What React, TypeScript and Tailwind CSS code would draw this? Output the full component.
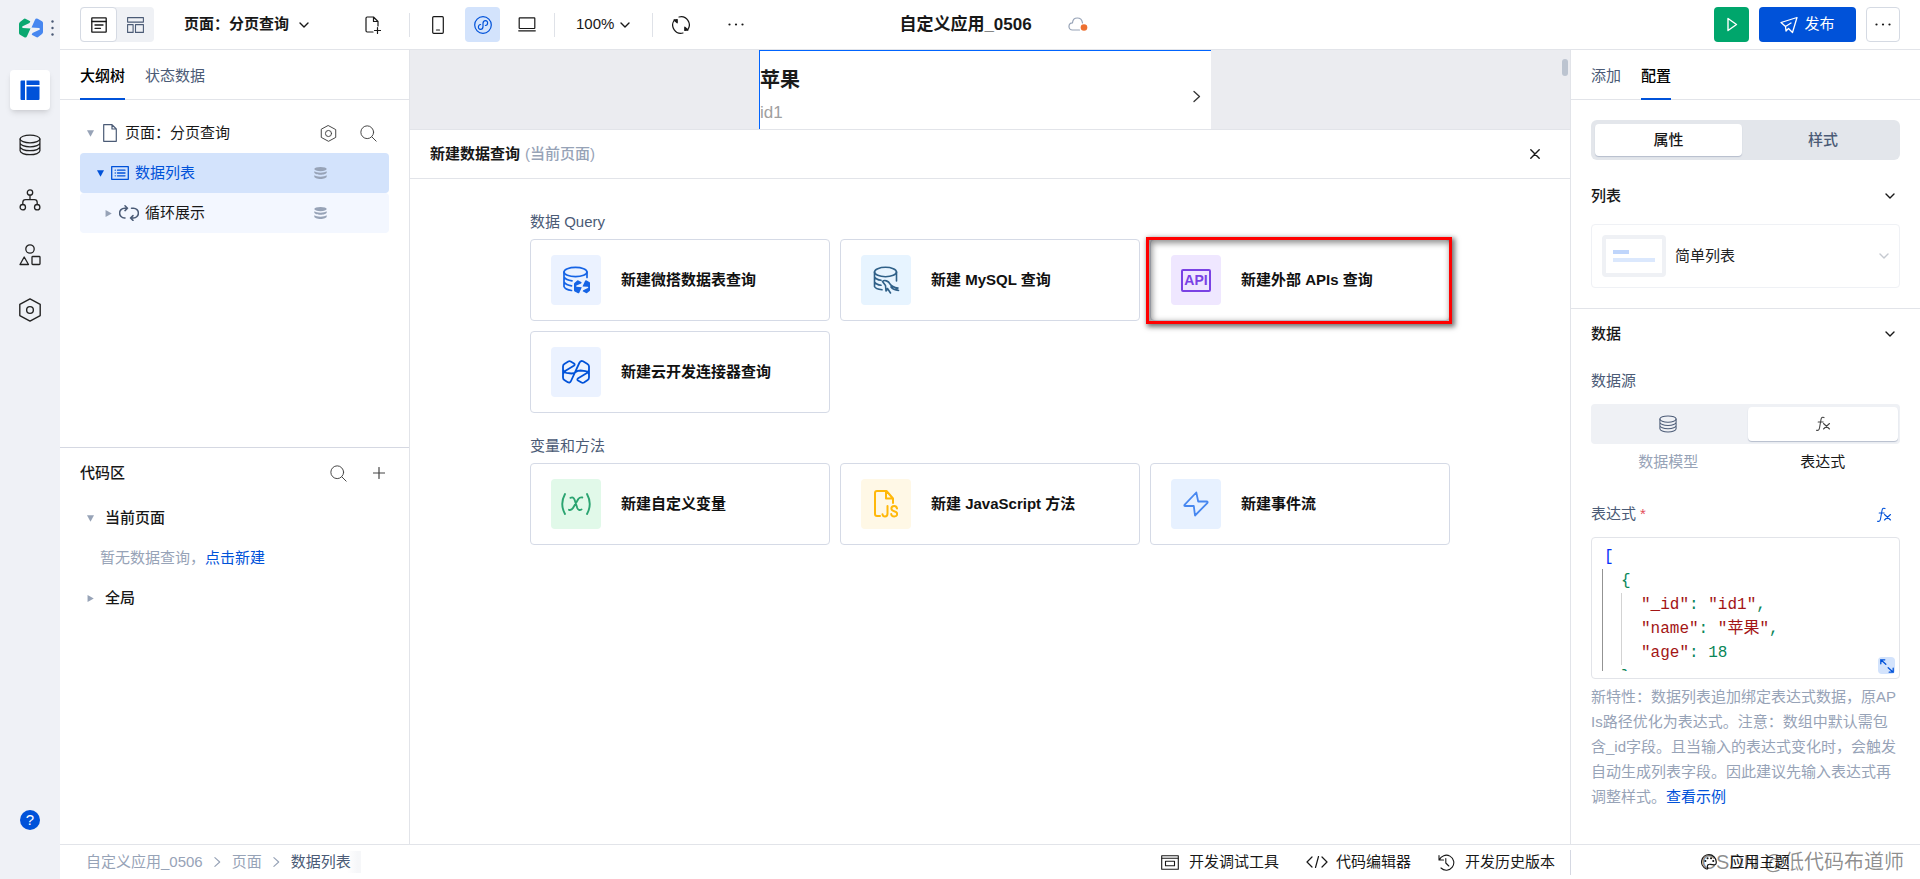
import { useState, type ReactNode } from 'react'

type IconProps = { className?: string }

type SvgProps = IconProps & { box?: string; width?: number; children: ReactNode }

function Svg({ className = 'size-5', box = '0 0 20 20', width = 1.15, children }: SvgProps) {
  return (
    <svg
      className={`shrink-0 ${className}`}
      viewBox={box}
      fill="none"
      stroke="currentColor"
      strokeWidth={width}
      strokeLinejoin="round"
      strokeLinecap="round"
      aria-hidden="true"
    >
      {children}
    </svg>
  )
}

const greenHalf =
  'M0 6Q0 4.800 1 4L4.800.9Q5.500.3 6.400.7L11.300 3.300 10.500 5 3.600 8.200Q2.400 9.200 3.900 9.900L11.500 10.600 8 18.200Q7.200 20.200 5.300 19.300L1 16.800Q0 16.200 0 15Z'
const blueHalf =
  'M24 14Q24 15.200 23 16L19.200 19.100Q18.500 19.700 17.600 19.300L12.700 16.700 13.500 15 20.400 11.800Q21.600 10.800 20.100 10.100L12.500 9.400 16 1.800Q16.800-.2 18.700.7L23 3.200Q24 3.800 24 5Z'

function Logo() {
  return (
    <svg className="h-5 w-6 shrink-0" viewBox="0 0 24 20" aria-hidden="true">
      <path fill="#0aa870" d={greenHalf} />
      <path fill="#4787f0" d={blueHalf} />
    </svg>
  )
}

const DatabaseIcon = ({ className = 'size-[22px]' }: IconProps) => (
  <Svg className={className}>
    <ellipse cx="10" cy="4.500" rx="9" ry="3.500" />
    <path d="M1 4.500v10.800c0 1.900 4 3.500 9 3.500s9-1.600 9-3.500V4.500M1 8.100c0 1.900 4 3.500 9 3.500s9-1.600 9-3.500M1 11.700c0 1.900 4 3.500 9 3.500s9-1.600 9-3.500" />
  </Svg>
)

const StackIcon = () => (
  <svg className="h-3 w-[13px] shrink-0 text-[#97a3b7]" viewBox="0 0 13 12" fill="currentColor" aria-hidden="true">
    <ellipse cx="6.500" cy="2.100" rx="6.200" ry="2.100" />
    <path d="M.3 4.300c1 .9 3.500 1.400 6.200 1.400s5.200-.5 6.200-1.400v1.200c0 1.200-2.800 2.300-6.200 2.300S.3 6.700.3 5.500ZM.3 8.300c1 .9 3.500 1.400 6.200 1.400s5.200-.5 6.200-1.400v1.200c0 1.200-2.800 2.500-6.200 2.500S.3 10.700.3 9.500Z" />
  </svg>
)

const HexIcon = ({ className = 'size-4', r = 3.6 }: IconProps & { r?: number }) => (
  <Svg className={className}>
    <path d="M10 .8 18.500 5.400v9.200L10 19.200 1.500 14.600V5.400Z" />
    <circle cx="10" cy="10" r={r} />
  </Svg>
)

const SearchIcon = () => (
  <Svg className="size-[17px]">
    <circle cx="8.500" cy="8.500" r="7.500" />
    <path d="m14 14 5 5" />
  </Svg>
)

const ChevronDown = ({ className = 'size-[10px]' }: IconProps) => (
  <Svg className={className} box="0 0 10 10" width={1.4}>
    <path d="m1 3 4 4 4-4" />
  </Svg>
)

const ChevronRight = ({ className = 'h-3 w-2' }: IconProps) => (
  <Svg className={className} box="0 0 8 12" width={1.3}>
    <path d="m1 1 5.500 5L1 11" />
  </Svg>
)

function Caret({ open, className = 'text-[#97a3b7]' }: IconProps & { open?: boolean }) {
  return (
    <svg className={`size-[7px] shrink-0 ${className}`} viewBox="0 0 6 6" fill="currentColor" aria-hidden="true">
      <path d={open ? 'M0 .3h6L3 5.800Z' : 'M.5 0v6L5.800 3Z'} />
    </svg>
  )
}

const Dots = () => (
  <svg className="h-[3px] w-4" viewBox="0 0 16 3" fill="currentColor" aria-hidden="true">
    <circle cx="1.500" cy="1.500" r="1.100" />
    <circle cx="8" cy="1.500" r="1.100" />
    <circle cx="14.500" cy="1.500" r="1.100" />
  </svg>
)

const FxIcon = () => (
  <Svg className="size-4" box="0 0 16 16" width={1.1}>
    <path d="M9 1.600C7.300.8 6.300 1.600 6 3.500L4.500 12c-.4 2-1.300 2.800-3 2.200M3.200 6h5M8.500 7.500l6 5.500M14.500 7.500l-6 5.500" />
  </Svg>
)

const Divider = () => <span className="h-6 w-px bg-[#dfe2e8]" />

const navItems = [
  {
    label: '设计',
    icon: (
      <svg className="size-5" viewBox="0 0 20 20" fill="#0052d9" aria-hidden="true">
        <path d="M1.500.5H5V20H1.500Q.5 20 .5 19V1.500Q.5.500 1.500.500ZM6.500.5H18.500Q19.500.500 19.500 1.500V5H6.500ZM6.500 6.500H19.500V19Q19.500 20 18.500 20H6.500Z" />
      </svg>
    ),
  },
  { label: '数据源', icon: <DatabaseIcon /> },
  {
    label: '流程',
    icon: (
      <Svg className="size-[22px]" box="0 0 22 22" width={1.3}>
        <circle cx="11" cy="3.500" r="2.700" />
        <circle cx="3.800" cy="18.200" r="2.700" />
        <circle cx="18.200" cy="18.200" r="2.700" />
        <path d="M11 6.200v4.500M3.800 15.500v-2q0-2.800 2.800-2.800h8.800q2.800 0 2.800 2.800v2" />
      </Svg>
    ),
  },
  {
    label: '素材',
    icon: (
      <Svg className="size-[22px]" box="0 0 22 22" width={1.3}>
        <circle cx="11" cy="5" r="4.200" />
        <path d="m5.200 13 4.300 7.500H1Z" />
        <rect x="13" y="12.500" width="8" height="8" rx=".8" />
      </Svg>
    ),
  },
  { label: '设置', icon: <HexIcon className="size-6" r={2.8} /> },
]

function Sidebar() {
  return (
    <nav className="flex w-[60px] shrink-0 flex-col items-center bg-[#eff1f6]" aria-label="主导航">
      <div className="flex h-[55px] w-full items-center gap-2 pl-[19px]">
        <Logo />
        <svg className="h-4 w-[3px]" viewBox="0 0 3 16" fill="#4b5b76" aria-hidden="true">
          <circle cx="1.500" cy="1.500" r="1.200" />
          <circle cx="1.500" cy="8" r="1.200" />
          <circle cx="1.500" cy="14.500" r="1.200" />
        </svg>
      </div>
      <div className="flex flex-col gap-[15px] pt-[15px]">
        {navItems.map((item, i) => (
          <button
            key={item.label}
            type="button"
            aria-label={item.label}
            className={
              i === 0
                ? 'flex size-10 items-center justify-center rounded bg-white shadow-md'
                : 'flex size-10 items-center justify-center rounded text-[#222]'
            }
          >
            {item.icon}
          </button>
        ))}
      </div>
      <button
        type="button"
        aria-label="帮助"
        className="mt-auto mb-[49px] flex size-5 items-center justify-center rounded-full bg-[#0052d9] text-[15px] text-white"
      >
        ?
      </button>
    </nav>
  )
}

function Header() {
  return (
    <header className="flex h-[50px] shrink-0 items-center border-b border-[#e2e4e9] pr-5 pl-5">
      <div className="flex h-[35px] rounded bg-[#eff1f5]">
        <button
          type="button"
          aria-label="页面视图"
          className="flex w-[37px] items-center justify-center rounded border border-[#d5dae3] bg-white"
        >
          <Svg className="size-4" box="0 0 16 16" width={1.3}>
            <rect x=".8" y=".8" width="14.400" height="14.400" rx=".5" />
            <path d="M1 4.500h14M4 8h8M4 11.300h5.500" />
          </Svg>
        </button>
        <button
          type="button"
          aria-label="布局视图"
          className="flex w-[37px] items-center justify-center text-[#4b5b76]"
        >
          <Svg className="h-4 w-[17px]" box="0 0 17 16" width={1.1}>
            <rect x=".6" y=".6" width="15.800" height="4.500" />
            <rect x=".6" y="7.600" width="5.500" height="7.800" />
            <rect x="8.500" y="7.600" width="7.900" height="7.800" />
          </Svg>
        </button>
      </div>
      <button type="button" className="ml-[30px] flex items-center gap-[10px] font-bold">
        页面：分页查询
        <ChevronDown />
      </button>
      <div className="ml-14 flex items-center">
        <button type="button" aria-label="新建页面">
          <Svg className="h-[18px] w-4" box="0 0 16 18" width={1.2}>
            <path d="M8 16H2.200Q1 16 1 14.800V2.200Q1 1 2.200 1H8.500L13 5.500V10M8.500 1v4.500H13M12.500 11.500v6M9.500 14.500h6" />
          </Svg>
        </button>
        <span className="ml-7 flex">
          <Divider />
        </span>
        <button type="button" aria-label="手机" className="flex w-[55px] justify-center">
          <Svg className="h-[18px] w-3" box="0 0 12 18" width={1.2}>
            <rect x=".7" y=".7" width="10.600" height="16.600" rx="1" />
            <path d="M4.500 14h3" />
          </Svg>
        </button>
        <button
          type="button"
          aria-label="小程序"
          className="flex size-[35px] items-center justify-center rounded bg-[#d3e3fc] text-[#0052d9]"
        >
          <Svg className="size-[18px]" box="0 0 18 18" width={1.2}>
            <circle cx="9" cy="9" r="8.300" />
            <path d="M6.600 8.500C3.700 8.900 3.700 13.400 6.400 13.400 8.200 13.400 9 12 9 10.500V7.500C9 6 9.800 4.600 11.600 4.600 14.300 4.600 14.300 9.100 11.400 9.500" />
          </Svg>
        </button>
        <button type="button" aria-label="电脑" className="flex w-[54px] justify-center">
          <Svg className="h-[15px] w-[18px]" box="0 0 18 15" width={1.2}>
            <rect x="1.200" y=".8" width="15.600" height="10.700" rx=".5" />
            <path d="M.7 13.800h16.600" />
          </Svg>
        </button>
        <Divider />
        <button type="button" className="ml-[21px] flex items-center gap-[6px]">
          100%
          <ChevronDown />
        </button>
        <span className="ml-[22px] flex">
          <Divider />
        </span>
        <button type="button" aria-label="刷新" className="ml-[19px]">
          <Svg className="size-[18px]" box="0 0 18 18" width={1.2}>
            <path d="M7 1A8.200 8.200 0 0 1 15.500 14M11 17A8.200 8.200 0 0 1 2.500 4" />
            <path fill="currentColor" d="M2 4 5.200 3.500 5.200 6.800ZM16 14 12.800 14.500 12.800 11.200Z" />
          </Svg>
        </button>
        <button type="button" aria-label="更多" className="ml-[38px]">
          <Dots />
        </button>
      </div>
      <h1 className="ml-[155px] text-[17px] font-bold">自定义应用_0506</h1>
      <Svg className="ml-9 h-[15px] w-5 text-[#97a3b7]" box="0 0 20 15" width={1.2}>
        <path d="M11.500 13H4.500C-.2 13-.2 6 4.500 5.800 5-.6 13.500-.6 14.500 5.800" />
        <circle cx="16" cy="10.500" r="3.300" fill="#ed7031" stroke="none" />
      </Svg>
      <div className="ml-auto flex items-center gap-[10px]">
        <button
          type="button"
          aria-label="预览"
          className="flex size-[35px] items-center justify-center rounded bg-[#00a66c] text-white"
        >
          <Svg className="h-[15px] w-3" box="0 0 12 15" width={1.4}>
            <path d="M2 1.500 10.500 7.500 2 13.500Z" />
          </Svg>
        </button>
        <button
          type="button"
          className="flex h-[35px] w-[97px] items-center justify-center gap-[6px] rounded bg-[#0052d9] text-white"
        >
          <Svg className="size-[18px]" box="0 0 18 18" width={1.3}>
            <path d="M17 1.500 1 6.500 5.500 10.500 6 15 8.500 12.500 12.500 16.500ZM5.500 10.500 11 7" />
          </Svg>
          发布
        </button>
        <button
          type="button"
          aria-label="更多操作"
          className="flex h-[35px] w-[34px] items-center justify-center rounded border border-[#d5dae3]"
        >
          <Dots />
        </button>
      </div>
    </header>
  )
}

function Tabs({ items, active }: { items: string[]; active: string }) {
  const [current, setCurrent] = useState(active)
  return (
    <div role="tablist" className="flex h-[50px] shrink-0 gap-5 border-b border-[#e2e4e9] px-5">
      {items.map((t) => (
        <button
          key={t}
          type="button"
          role="tab"
          aria-selected={t === current}
          onClick={() => setCurrent(t)}
          className={
            t === current
              ? '-mb-px border-b-2 border-[#0052d9] pt-1 font-medium text-black'
              : '-mb-px border-b-2 border-transparent pt-1 text-[#4b5b76]'
          }
        >
          {t}
        </button>
      ))}
    </div>
  )
}

function OutlinePanel() {
  return (
    <aside className="flex w-[350px] shrink-0 flex-col border-r border-[#e2e4e9]">
      <Tabs items={['大纲树', '状态数据']} active="大纲树" />
      <div className="flex h-[347px] shrink-0 flex-col px-5 pt-[13px]">
        <div className="flex h-10 items-center pl-[7px] pr-3">
          <Caret open />
          <Svg className="ml-[9px] h-[18px] w-[14px] text-[#4b5b76]" box="0 0 14 18" width={1.2}>
            <path d="M.7.7H9L13.300 5V17.300H.7ZM9 .7V5h4.300" />
          </Svg>
          <span className="ml-2">页面：分页查询</span>
          <button type="button" aria-label="页面设置" className="ml-auto text-[#444]">
            <HexIcon className="size-[17px]" />
          </button>
          <button type="button" aria-label="搜索组件" className="ml-[23px] text-[#444]">
            <SearchIcon />
          </button>
        </div>
        <div className="flex h-10 items-center rounded bg-[#d3e3fc] pr-[62px] pl-[17px] text-[#0052d9]">
          <Caret open className="text-[#0052d9]" />
          <Svg className="ml-[7px] h-[14px] w-[18px]" box="0 0 18 14" width={1.3}>
            <rect x=".7" y=".7" width="16.600" height="12.600" />
            <path d="M4.200 4.200h.1M4.200 7h.1M4.200 9.800h.1M6.500 4.200h7.500M6.500 7h7.500M6.500 9.800h7.500" />
          </Svg>
          <span className="ml-[6px] mr-auto">数据列表</span>
          <StackIcon />
        </div>
        <div className="flex h-10 items-center rounded bg-[#f3f7ff] pr-[62px] pl-[25px]">
          <Caret />
          <Svg className="ml-[7px] h-4 w-5 text-[#4b5b76]" box="0 0 20 16" width={1.5}>
            <path d="M6 13H5.500A4.900 4.900 0 0 1 5.500 3.200H8.500M6 .800 8.500 3.200 6 5.600M12.500 3.200H14.500A4.900 4.900 0 0 1 14.500 13H11.500M14 10.600 11.500 13 14 15.400" />
          </Svg>
          <span className="mr-auto ml-[6px]">循环展示</span>
          <StackIcon />
        </div>
      </div>
      <section className="border-t border-[#d5d8e2] px-5">
        <div className="flex h-[50px] items-center pr-1">
          <h2 className="mr-auto font-medium">代码区</h2>
          <button type="button" aria-label="搜索代码" className="text-[#444]">
            <SearchIcon />
          </button>
          <button type="button" aria-label="新建代码" className="ml-[26px] text-[#444]">
            <Svg className="size-3" box="0 0 12 12" width={1.2}>
              <path d="M6 .5v11M.5 6h11" />
            </Svg>
          </button>
        </div>
        <div className="flex h-10 items-center gap-[11px] pl-[7px] font-medium">
          <Caret open />
          当前页面
        </div>
        <p className="flex h-10 items-center pl-5 text-[#97a3b7]">
          暂无数据查询，
          <a href="#new" className="text-[#0052d9]">
            点击新建
          </a>
        </p>
        <div className="flex h-10 items-center gap-[11px] pl-[7px] font-medium">
          <Caret />
          全局
        </div>
      </section>
    </aside>
  )
}

const wavePath =
  'M1 8.500Q1 6.800 2.300 6L6.300 3.500Q7.500 2.800 8.700 3.500L12 5.500Q13.400 6.600 11.800 7.800L3.500 12.800Q1 14.500 1 16.500M1 8.500V19.500Q1 21.200 2.300 22L5.800 24.200Q8 25.200 9 23L17.300 5Q18.600 2.200 21 3.300L25.500 6Q27 6.900 27 8.500V19.500Q27 21.200 25.700 22L22 24.500Q20.700 25.200 19.500 24.500L16 22.500Q14.600 21.400 16.200 20.200L24.500 15.200Q27 13.500 27 11.500M1 11.500Q1.500 14.300 4.500 14.800L9.500 15.500Q12.500 15.500 14 13.900 15.500 12.500 18.500 12.500L23.500 13.200Q26.500 13.700 27 16.500'

type Card = { title: string; bg: string; icon: ReactNode; marked?: boolean }

const queryCards: Card[] = [
  {
    title: '新建微搭数据表查询',
    bg: 'bg-[#ebf2ff] text-[#1664e5]',
    icon: (
      <Svg className="size-7" box="0 0 28 28" width={1.7}>
        <ellipse cx="13.500" cy="6" rx="11.500" ry="4.700" />
        <path d="M2 6v14.500Q3 23.500 9.500 24.500M25 6v5.500M2 11q2 3 8 3.800M2 16q2 3 7.500 3.800" />
        <g transform="translate(12 14) scale(.68)" fill="currentColor" stroke="none">
          <path d={greenHalf} />
          <path d={blueHalf} />
        </g>
      </Svg>
    ),
  },
  {
    title: '新建 MySQL 查询',
    bg: 'bg-[#e7f4ff] text-[#2f6088]',
    icon: (
      <Svg className="size-7" box="0 0 28 28" width={1.6}>
        <ellipse cx="13.500" cy="6" rx="11" ry="4.700" />
        <path d="M2.500 6v14.500q1 2.500 7.500 3.300M24.500 6v9M2.500 11q1.500 2.500 6.500 3.300M2.500 16q1.500 2.500 6.500 3.300" />
        <path d="M10.500 15.500c2-2 6-.5 7.500 2.500 1.500 2.500 4 3.500 8 4l-2.500 1 3 1.500c-4-.5-6-1.500-7.500-3.500M10.500 15.500l3 4 .5 5.500 1.500-2.500 3 4.500" />
      </Svg>
    ),
  },
  {
    title: '新建外部 APIs 查询',
    bg: 'bg-[#efe7ff] text-[#7a42e4]',
    marked: true,
    icon: (
      <span className="flex h-[23px] w-[30px] items-center justify-center rounded-xs border-2 border-[#7a42e4] text-sm leading-none font-bold">
        API
      </span>
    ),
  },
  {
    title: '新建云开发连接器查询',
    bg: 'bg-[#ebf2ff] text-[#0052d9]',
    icon: (
      <Svg className="size-7" box="0 0 28 28" width={1.8}>
        <path d={wavePath} />
      </Svg>
    ),
  },
]

const methodCards: Card[] = [
  {
    title: '新建自定义变量',
    bg: 'bg-[#e1f9e9] text-[#2ba471]',
    icon: (
      <Svg className="h-[22px] w-[30px]" box="0 0 30 22" width={1.9}>
        <path d="M4 1Q-1.500 11 4 21M26 1Q31.500 11 26 21M9.500 4.800q2.800-1.300 4 1.700l2.800 8.500q1.200 3 4.200 1.500M21.300 4.500q-2.500-.5-4 1.500l-5.300 9q-1.500 2.500-4 1.800" />
      </Svg>
    ),
  },
  {
    title: '新建 JavaScript 方法',
    bg: 'bg-[#fff8e6] text-[#ffb80a]',
    icon: (
      <Svg className="h-7 w-6" box="0 0 24 28" width={2}>
        <path d="M6 26H3Q1 26 1 24V3Q1 1 3 1H12.500L19 8.500V13M12 1.500V8.500H19" />
        <path d="M13.500 16V23.500Q13.500 26.500 11 26.500 8.800 26.500 8.500 24.300M23 18.500Q22.500 16 20.200 16 17.400 16 17.400 18.600 17.400 20.500 20.200 21.200 23.200 22 23.200 23.900 23.200 26.500 20.300 26.500 17.400 26.500 17.200 24" />
      </Svg>
    ),
  },
  {
    title: '新建事件流',
    bg: 'bg-[#e7f1ff] text-[#4787f0]',
    icon: (
      <Svg className="h-[26px] w-[26px]" box="0 0 26 26" width={1.8}>
        <path d="M13.300 1.500 1.500 13.800Q.9 15 2.200 15H10.800L12 24.500 24.500 11.800Q25 10.500 23.800 10.500H15.200Z" />
      </Svg>
    ),
  },
]

function CardGrid({ title, cards }: { title: string; cards: Card[] }) {
  return (
    <section>
      <h3 className="mb-[7px] leading-5 text-[#4b5b76]">{title}</h3>
      <div className="grid grid-cols-3 gap-[10px]">
        {cards.map((c) => (
          <button
            key={c.title}
            type="button"
            className="relative flex h-[82px] items-center gap-5 rounded border border-[#d5dae6] px-5 font-bold text-[#111]"
          >
            <span className={`flex size-[50px] items-center justify-center rounded font-medium ${c.bg}`}>
              {c.icon}
            </span>
            {c.title}
            {c.marked && (
              <span className="absolute -top-[3px] -right-[3px] -bottom-1 -left-[5px] border-3 border-[#f00] shadow-[2px_2px_5px_1px_rgba(0,0,0,0.55),inset_2px_2px_6px_1px_rgba(0,0,0,0.45)]" />
            )}
          </button>
        ))}
      </div>
    </section>
  )
}

function Workspace() {
  return (
    <main className="flex min-w-0 flex-1 flex-col">
      <div className="relative flex h-[79px] shrink-0 justify-center bg-[#ebecf0] pr-[10px]">
        <div className="flex w-[452px] items-center border-t border-l border-[#0064ff] bg-white pt-3 pr-[10px]">
          <div className="mr-auto">
            <div className="text-xl leading-[34px] font-bold text-[#1a1a1a]">苹果</div>
            <div className="text-[17px] leading-8 text-[#a0a0a0]">id1</div>
          </div>
          <span className="text-[#333]">
            <ChevronRight className="h-[13px] w-2" />
          </span>
        </div>
        <span className="absolute top-[9px] right-[2px] h-[17px] w-[6px] rounded-full bg-[#bcc4d0]" />
      </div>
      <div className="flex h-[50px] shrink-0 items-center border-y border-[#e2e4e9] px-5">
        <h2 className="font-bold">新建数据查询</h2>
        <span className="ml-[5px] font-medium text-[#97a3b7]">(当前页面)</span>
        <button type="button" aria-label="关闭" className="mr-[10px] ml-auto">
          <Svg className="size-[10px]" box="0 0 10 10" width={1.4}>
            <path d="m.8.8 8.400 8.400M9.200.8.8 9.200" />
          </Svg>
        </button>
      </div>
      <div className="flex flex-1 flex-col gap-[23px] px-[120px] pt-[33px]">
        <CardGrid title="数据 Query" cards={queryCards} />
        <CardGrid title="变量和方法" cards={methodCards} />
      </div>
    </main>
  )
}

function CodeEditor() {
  return (
    <div className="relative h-[142px] rounded border border-[#e2e4e9] px-[10px] pt-[7px]">
      <div
        role="textbox"
        aria-multiline="true"
        aria-labelledby="expr-label"
        tabIndex={0}
        className="h-[126px] overflow-hidden font-['Liberation_Mono','Noto_Sans_CJK_SC',monospace] text-base leading-6 whitespace-pre text-[#0a8658]"
      >
        <div className="pl-[2px] text-[#0431fa]">[</div>
        <div className="border-l border-[#939393] pl-[18px]">
          <div>{'{'}</div>
          <div className="border-l border-[#d3d3d3] pl-[19px]">
            <div>
              <span className="text-[#a31515]">"_id"</span>: <span className="text-[#a31515]">"id1"</span>,
            </div>
            <div>
              <span className="text-[#a31515]">"name"</span>: <span className="text-[#a31515]">"苹果"</span>,
            </div>
            <div>
              <span className="text-[#a31515]">"age"</span>: 18
            </div>
          </div>
          <div>{'}'}</div>
        </div>
      </div>
      <button
        type="button"
        aria-label="展开编辑器"
        className="absolute right-1 bottom-1 flex size-[17px] items-center justify-center rounded bg-[#d3e3fc] text-[#0052d9]"
      >
        <Svg className="size-[14px]" box="0 0 14 14" width={1.3}>
          <path d="M.8 4.800V.8h4M.8.8l5 4.500M13.200 9.200v4h-4M13.200 13.200l-5-4.500" />
        </Svg>
      </button>
    </div>
  )
}

function ConfigPanel() {
  return (
    <aside className="flex w-[350px] shrink-0 flex-col border-l border-[#e2e4e9]">
      <Tabs items={['添加', '配置']} active="配置" />
      <section className="border-b border-[#e2e4e9] px-5 pt-5 pb-5">
        <div className="flex h-10 gap-1 rounded-md bg-[#e3e6eb] py-1 pl-1 font-medium">
          <button type="button" className="w-[147px] rounded bg-white shadow-[0_1px_1px_#b5bdcc]">
            属性
          </button>
          <button type="button" className="flex-1 text-[#4b5b76]">
            样式
          </button>
        </div>
        <div className="mt-4 flex h-10 items-center justify-between pr-[5px]">
          <h2 className="font-medium">列表</h2>
          <ChevronDown />
        </div>
        <label className="mt-2 flex h-16 items-center rounded border border-[#eff1f5] pr-[10px] pl-[10px]">
          <span className="flex h-[42px] w-16 flex-col justify-center gap-1 rounded border-4 border-[#eff1f5] pl-[7px]">
            <span className="h-1 w-4 bg-[#bfd5fb]" />
            <span className="h-1 w-[42px] bg-[#dbe8fd]" />
          </span>
          <select aria-label="列表模板" className="mr-auto ml-[9px] flex-1 appearance-none text-[#222]">
            <option>简单列表</option>
          </select>
          <ChevronDown className="size-[10px] text-[#c5c9d0]" />
        </label>
      </section>
      <section className="px-5 pt-[5px]">
        <div className="flex h-10 items-center justify-between pr-[5px]">
          <h2 className="font-medium">数据</h2>
          <ChevronDown />
        </div>
        <h3 className="mt-[17px] leading-5 text-[#4b5b76]">数据源</h3>
        <div className="mt-[13px] grid grid-cols-2 text-center">
          <button type="button" className="flex flex-col text-[#97a3b7]">
            <span className="flex h-10 w-full items-center justify-center rounded-l bg-[#eff1f5] text-[#4b5b76]">
              <DatabaseIcon className="size-[18px]" />
            </span>
            <span className="w-full pt-[6px] leading-6">数据模型</span>
          </button>
          <button type="button" className="flex flex-col">
            <span className="flex h-10 w-full rounded-r bg-[#eff1f5] px-[2px] py-[3px]">
              <span className="flex flex-1 items-center justify-center rounded bg-white text-[#444] shadow-[0_1px_1px_#b5bdcc]">
                <FxIcon />
              </span>
            </span>
            <span className="w-full pt-[6px] leading-6">表达式</span>
          </button>
        </div>
        <div className="mt-7 mb-[10px] flex h-[25px] items-center">
          <span id="expr-label" className="text-[#4b5b76]">
            表达式
          </span>
          <span className="ml-1 text-[#e34d59]">*</span>
          <button type="button" aria-label="绑定表达式" className="mr-2 ml-auto text-[#0052d9]">
            <FxIcon />
          </button>
        </div>
        <CodeEditor />
        <p className="mt-[5px] leading-[25px] break-all text-[#97a3b7]">
          新特性：数据列表追加绑定表达式数据，原APIs路径优化为表达式。注意：数组中默认需包含_id字段。且当输入的表达式变化时，会触发自动生成列表字段。因此建议先输入表达式再调整样式。
          <a href="#example" className="text-[#0052d9]">
            查看示例
          </a>
        </p>
      </section>
    </aside>
  )
}

function Footer() {
  return (
    <footer className="flex h-[35px] shrink-0 items-center border-t border-[#e2e4e9]">
      <nav className="flex items-center pl-[26px] text-[#97a3b7]" aria-label="面包屑">
        <a href="#app">自定义应用_0506</a>
        <ChevronRight className="mx-[11px] h-3 w-[7px]" />
        <a href="#page">页面</a>
        <ChevronRight className="mx-[11px] h-3 w-[7px]" />
        <a href="#list" className="bg-linear-to-r from-white from-80% to-[#f6f7f9] to-95% pr-[10px] text-[#4b5b76]">
          数据列表
        </a>
      </nav>
      <div className="mr-[15px] ml-auto flex items-center gap-[27px]">
        <button type="button" className="flex items-center gap-[10px]">
          <Svg className="h-[15px] w-[18px]" box="0 0 18 15" width={1.1}>
            <rect x=".7" y=".7" width="16.600" height="13.600" />
            <path d="M1 3.200h16M4.500 6.300h9v4.500h-9Z" />
          </Svg>
          开发调试工具
        </button>
        <button type="button" className="flex items-center gap-2">
          <Svg className="h-3 w-[22px]" box="0 0 22 12" width={1.2}>
            <path d="m6 1-5 5 5 5M16 1l5 5-5 5M12.500.5l-3 11" />
          </Svg>
          代码编辑器
        </button>
        <button type="button" className="flex items-center gap-[10px]">
          <Svg className="size-[17px]" box="0 0 17 17" width={1.1}>
            <path d="M1 1.500v4.500h4.500M1.300 6A7.500 7.500 0 1 1 3 14M7.800 4.500v4.500l3 3" />
          </Svg>
          开发历史版本
        </button>
      </div>
      <div className="relative flex h-[25px] w-[350px] items-center justify-center border-l border-[#d5d8e2]">
        <button type="button" className="flex items-center gap-3">
          <Svg className="size-4" box="0 0 16 16" width={1.2}>
            <path d="M8 .7A7.300 7.300 0 0 0 5 14.700C7 15.500 7 14.500 6.500 13 6 11 7.500 10 9.500 10.300L13 10.800C15 11 15.300 9.500 15.300 8A7.300 7.300 0 0 0 8 .7Z" />
            <path d="M4.300 7h.1M6.500 4.200h.1M10 4.200h.1M12.200 7h.1" strokeWidth="2" />
          </Svg>
          应用主题
        </button>
        <span className="pointer-events-none absolute right-4 text-xl whitespace-nowrap text-black/45">
          CSDN @低代码布道师
        </span>
      </div>
    </footer>
  )
}

export default function App() {
  return (
    <div
      lang="zh-CN"
      className="flex h-screen bg-white font-['Liberation_Sans','Noto_Sans_CJK_SC',sans-serif] text-[15px] text-[#181818]"
    >
      <Sidebar />
      <div className="flex min-w-0 flex-1 flex-col">
        <Header />
        <div className="flex min-h-0 flex-1">
          <OutlinePanel />
          <Workspace />
          <ConfigPanel />
        </div>
        <Footer />
      </div>
    </div>
  )
}
